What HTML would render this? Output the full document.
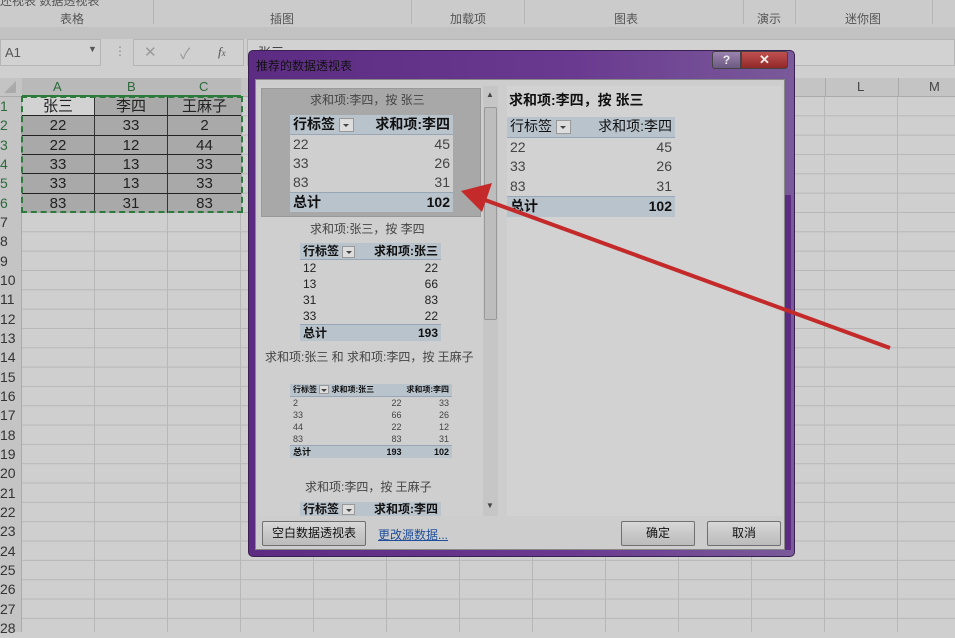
<!DOCTYPE html>
<html><head><meta charset="utf-8"><style>
*{margin:0;padding:0;box-sizing:border-box}
body{width:955px;height:632px;overflow:hidden;background:#cfcfcf;font-family:"Liberation Sans","Noto Sans CJK SC",sans-serif;position:relative;color:#222}
.a{position:absolute}
.t{position:absolute;white-space:nowrap}
.pv{position:absolute}
.pv .r{display:flex;justify-content:space-between;padding:0 3px}
.pv .h{background:#b9c3cc;border-bottom:1px solid #97a7b5;font-weight:bold;color:#111}
.pv .tot{background:#b9c3cc;border-top:1px solid #97a7b5;font-weight:bold;color:#111}
.dd{display:inline-block;border:1px solid #999;background:#ddd;vertical-align:middle;position:relative}
.dd:after{content:"";position:absolute;left:50%;top:50%;margin:-1px 0 0 -3px;border:3px solid transparent;border-top:3px solid #444}
.btn{position:absolute;border:1px solid #707070;border-radius:2px;background:linear-gradient(#d8d8d8,#c8c8c8 50%,#bcbcbc);font-size:12px;text-align:center;line-height:22px;color:#111}
.dg>div{height:19.33px;line-height:19px}
</style></head><body>
<div class="a" style="left:0;top:0;width:955px;height:28px;background:#cbcbcb"></div>
<div class="t" style="left:0;top:-8px;font-size:12px;color:#555">还视表 数据透视表</div>
<div class="t" style="left:60px;top:10px;font-size:12px;color:#555">表格</div>
<div class="t" style="left:270px;top:10px;font-size:12px;color:#555">插图</div>
<div class="t" style="left:450px;top:10px;font-size:12px;color:#555">加载项</div>
<div class="t" style="left:614px;top:10px;font-size:12px;color:#555">图表</div>
<div class="t" style="left:757px;top:10px;font-size:12px;color:#555">演示</div>
<div class="t" style="left:845px;top:10px;font-size:12px;color:#555">迷你图</div>
<div class="a" style="left:153px;top:0;width:1px;height:24px;background:#b5b5b5"></div>
<div class="a" style="left:411px;top:0;width:1px;height:24px;background:#b5b5b5"></div>
<div class="a" style="left:524px;top:0;width:1px;height:24px;background:#b5b5b5"></div>
<div class="a" style="left:743px;top:0;width:1px;height:24px;background:#b5b5b5"></div>
<div class="a" style="left:795px;top:0;width:1px;height:24px;background:#b5b5b5"></div>
<div class="a" style="left:932px;top:0;width:1px;height:24px;background:#b5b5b5"></div>
<div class="a" style="left:0;top:27px;width:955px;height:12px;background:#c2c2c2"></div>
<div class="a" style="left:0;top:39px;width:101px;height:27px;border:1px solid #b5b5b5;background:#d2d2d2"></div>
<div class="t" style="left:5px;top:45px;font-size:13px;color:#555">A1</div>
<div class="t" style="left:88px;top:44px;font-size:9px;color:#555">▼</div>
<div class="t" style="left:114px;top:44px;font-size:12px;color:#888">⋮</div>
<div class="a" style="left:133px;top:39px;width:111px;height:27px;border:1px solid #b5b5b5;background:#d0d0d0"></div>
<div class="t" style="left:144px;top:43px;font-size:15px;color:#999">✕</div>
<div class="t" style="left:180px;top:43px;font-size:15px;color:#999">✓</div>
<div class="t" style="left:218px;top:44px;font-size:13px;color:#555;font-style:italic;font-family:'Liberation Serif',serif">f<span style="font-size:9px">x</span></div>
<div class="a" style="left:247px;top:39px;width:708px;height:27px;border:1px solid #b5b5b5;background:#d2d2d2"></div>
<div class="t" style="left:258px;top:42px;font-size:13px;color:#444">张三</div>
<div class="a" style="left:0;top:78px;width:955px;height:19px;background:#c4c4c4;border-bottom:1px solid #aaa"></div>
<div class="a" style="left:0;top:97px;width:22px;height:535px;background:#c4c4c4;border-right:1px solid #aaa"></div>
<div class="a" style="left:22px;top:97px;width:933px;height:535px;background-image:linear-gradient(90deg,#b7b7b7 1px,transparent 1px),linear-gradient(#b7b7b7 1px,transparent 1px);background-size:73px 19.33px;background-position:-1px -1px"></div>
<div class="a" style="left:22px;top:78px;width:219px;height:19px;background:#b9b9b9;border-bottom:2px solid #2c7a3c"></div>
<div class="t" style="left:53px;top:79px;font-size:13px;color:#2c6a3c">A</div>
<div class="t" style="left:127px;top:79px;font-size:13px;color:#2c6a3c">B</div>
<div class="t" style="left:199px;top:79px;font-size:13px;color:#2c6a3c">C</div>
<div class="t" style="left:857px;top:79px;font-size:13px;color:#444">L</div>
<div class="t" style="left:929px;top:79px;font-size:13px;color:#444">M</div>
<div class="a" style="left:825px;top:78px;width:1px;height:19px;background:#aaa"></div>
<div class="a" style="left:898px;top:78px;width:1px;height:19px;background:#aaa"></div>
<div class="a" style="left:4px;top:81px;width:0;height:0;border-left:12px solid transparent;border-bottom:12px solid #aaa"></div>
<div class="a dg" style="left:0;top:97px;font-size:14px;color:#333;width:22px">
<div style="color:#2c6a3c">1</div><div style="color:#2c6a3c">2</div><div style="color:#2c6a3c">3</div><div style="color:#2c6a3c">4</div><div style="color:#2c6a3c">5</div><div style="color:#2c6a3c">6</div><div>7</div><div>8</div><div>9</div><div>10</div><div>11</div><div>12</div><div>13</div><div>14</div><div>15</div><div>16</div><div>17</div><div>18</div><div>19</div><div>20</div><div>21</div><div>22</div><div>23</div><div>24</div><div>25</div><div>26</div><div>27</div><div>28</div></div>
<div class="a" style="left:22px;top:97px;width:220px;height:116px;background:#a9a9a9"></div>
<div class="a" style="left:22px;top:97px;width:73px;height:19px;background:#d2d2d2"></div>
<div class="a" style="left:22px;top:97px;width:220px;height:116px;font-size:15px;color:#222">
<div class="dg" style="display:grid;grid-template-columns:73px 73px 73px;text-align:center">
<div style="border-bottom:1px solid #222;border-right:1px solid #333">张三</div><div style="border-bottom:1px solid #222;border-right:1px solid #333">李四</div><div style="border-bottom:1px solid #222">王麻子</div>
<div style="border-bottom:1px solid #222;border-right:1px solid #333">22</div><div style="border-bottom:1px solid #222;border-right:1px solid #333">33</div><div style="border-bottom:1px solid #222">2</div>
<div style="border-bottom:1px solid #222;border-right:1px solid #333">22</div><div style="border-bottom:1px solid #222;border-right:1px solid #333">12</div><div style="border-bottom:1px solid #222">44</div>
<div style="border-bottom:1px solid #222;border-right:1px solid #333">33</div><div style="border-bottom:1px solid #222;border-right:1px solid #333">13</div><div style="border-bottom:1px solid #222">33</div>
<div style="border-bottom:1px solid #222;border-right:1px solid #333">33</div><div style="border-bottom:1px solid #222;border-right:1px solid #333">13</div><div style="border-bottom:1px solid #222">33</div>
<div style="border-right:1px solid #333">83</div><div style="border-right:1px solid #333">31</div><div>83</div>
</div></div>
<div class="a" style="left:21px;top:96px;width:222px;height:117px;border:2px dashed #2c7a3c"></div>
<div class="a" style="left:248px;top:50px;width:547px;height:507px;background:linear-gradient(90deg,#5c2c82,#6a3a90 60%,#7a5a9a);border:1px solid #3a2050;border-radius:5px"></div>
<div class="t" style="left:256px;top:57px;font-size:12px;color:#111">推荐的数据透视表</div>
<div class="a" style="left:712px;top:51px;width:29px;height:18px;border:1px solid #444;border-radius:3px 0 0 3px;background:linear-gradient(#9b83b0,#6b5a80);color:#eee;font-size:12px;text-align:center;font-weight:bold;line-height:16px">?</div>
<div class="a" style="left:741px;top:51px;width:47px;height:18px;border:1px solid #444;border-radius:0 3px 3px 0;background:linear-gradient(#c05050,#902828);color:#eee;font-size:13px;text-align:center;font-weight:bold;line-height:16px">✕</div>
<div class="a" style="left:255px;top:79px;width:530px;height:471px;background:#cdcdcd;border:1px solid #888"></div>
<div class="a" style="left:785px;top:195px;width:6px;height:355px;background:#5c2c82"></div>
<div class="a" style="left:258px;top:86px;width:226px;height:430px;background:#cfcfcf;overflow:hidden">
 <div class="a" style="left:3px;top:2px;width:220px;height:129px;background:#a8a8a8;border:1px solid #999"></div>
</div>
<div class="t" style="left:310px;top:91px;font-size:12px;color:#444">求和项:李四，按 张三</div>
<div class="pv" style="left:290px;top:115px;width:163px;font-size:14px;line-height:19px;background:#cfcfcf">
 <div class="r h"><span>行标签 <span class="dd" style="width:15px;height:14px"></span></span><span>求和项:李四</span></div>
 <div class="r" style="color:#444"><span>22</span><span>45</span></div>
 <div class="r" style="color:#444"><span>33</span><span>26</span></div>
 <div class="r" style="color:#444"><span>83</span><span>31</span></div>
 <div class="r tot"><span>总计</span><span>102</span></div>
</div>
<div class="t" style="left:310px;top:220px;font-size:12px;color:#444">求和项:张三，按 李四</div>
<div class="pv" style="left:300px;top:243px;width:141px;font-size:12px;line-height:16px">
 <div class="r h"><span>行标签 <span class="dd" style="width:13px;height:12px"></span></span><span>求和项:张三</span></div>
 <div class="r"><span>12</span><span>22</span></div>
 <div class="r"><span>13</span><span>66</span></div>
 <div class="r"><span>31</span><span>83</span></div>
 <div class="r"><span>33</span><span>22</span></div>
 <div class="r tot"><span>总计</span><span>193</span></div>
</div>
<div class="t" style="left:265px;top:348px;font-size:12px;color:#444">求和项:张三 和 求和项:李四，按 王麻子</div>
<div class="pv" style="left:290px;top:384px;width:162px;font-size:9px;line-height:12px;color:#444">
 <div class="r h" style="font-size:8px"><span>行标签 <span class="dd" style="width:10px;height:9px"></span> 求和项:张三</span><span>求和项:李四</span></div>
 <div class="r"><span>2</span><span>22&nbsp;&nbsp;&nbsp;&nbsp;&nbsp;&nbsp;&nbsp;&nbsp;&nbsp;&nbsp;&nbsp;&nbsp;&nbsp;&nbsp;&nbsp;33</span></div>
 <div class="r"><span>33</span><span>66&nbsp;&nbsp;&nbsp;&nbsp;&nbsp;&nbsp;&nbsp;&nbsp;&nbsp;&nbsp;&nbsp;&nbsp;&nbsp;&nbsp;&nbsp;26</span></div>
 <div class="r"><span>44</span><span>22&nbsp;&nbsp;&nbsp;&nbsp;&nbsp;&nbsp;&nbsp;&nbsp;&nbsp;&nbsp;&nbsp;&nbsp;&nbsp;&nbsp;&nbsp;12</span></div>
 <div class="r"><span>83</span><span>83&nbsp;&nbsp;&nbsp;&nbsp;&nbsp;&nbsp;&nbsp;&nbsp;&nbsp;&nbsp;&nbsp;&nbsp;&nbsp;&nbsp;&nbsp;31</span></div>
 <div class="r tot"><span>总计</span><span>193&nbsp;&nbsp;&nbsp;&nbsp;&nbsp;&nbsp;&nbsp;&nbsp;&nbsp;&nbsp;&nbsp;&nbsp;&nbsp;102</span></div>
</div>
<div class="t" style="left:305px;top:478px;font-size:12px;color:#444">求和项:李四，按 王麻子</div>
<div class="a" style="left:300px;top:502px;width:141px;height:14px;overflow:hidden">
 <div class="pv" style="left:0;top:0;width:141px;font-size:12px;line-height:14px"><div class="r h"><span>行标签 <span class="dd" style="width:13px;height:11px"></span></span><span>求和项:李四</span></div></div>
</div>
<div class="a" style="left:483px;top:86px;width:15px;height:430px;background:#c6c6c6"></div>
<div class="t" style="left:486px;top:90px;font-size:8px;color:#444">▲</div>
<div class="a" style="left:484px;top:107px;width:13px;height:213px;background:#bdbdbd;border:1px solid #999;border-radius:2px"></div>
<div class="t" style="left:486px;top:501px;font-size:8px;color:#444">▼</div>
<div class="a" style="left:507px;top:86px;width:275px;height:430px;background:#d2d2d2"></div>
<div class="t" style="left:509px;top:90px;font-size:14px;font-weight:bold;color:#111">求和项:李四，按 张三</div>
<div class="pv" style="left:507px;top:117px;width:168px;font-size:14px;line-height:19.5px">
 <div class="r h" style="font-weight:normal"><span>行标签 <span class="dd" style="width:15px;height:14px"></span></span><span>求和项:李四</span></div>
 <div class="r" style="color:#444"><span>22</span><span>45</span></div>
 <div class="r" style="color:#444"><span>33</span><span>26</span></div>
 <div class="r" style="color:#444"><span>83</span><span>31</span></div>
 <div class="r tot"><span>总计</span><span>102</span></div>
</div>
<div class="btn" style="left:262px;top:521px;width:104px;height:25px">空白数据透视表</div>
<div class="t" style="left:378px;top:526px;font-size:12px;color:#1f4f9a;text-decoration:underline">更改源数据...</div>
<div class="btn" style="left:621px;top:521px;width:74px;height:25px">确定</div>
<div class="btn" style="left:707px;top:521px;width:74px;height:25px">取消</div>
<svg class="a" style="left:0;top:0" width="955" height="632"><line x1="890" y1="348" x2="485" y2="200" stroke="#c42a2a" stroke-width="4"/><polygon points="461,191 492,183 482,212" fill="#c42a2a"/></svg>
</body></html>
